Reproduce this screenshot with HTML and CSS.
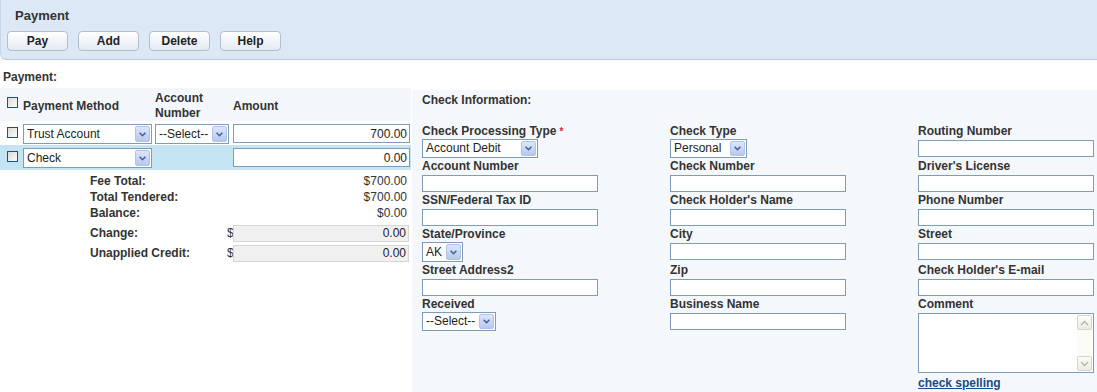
FILE: index.html
```html
<!DOCTYPE html>
<html lang="en">
<head>
    <meta charset="UTF-8">
    <title>Payment</title>
    <link rel="stylesheet" href="styles.css">
</head>
<body>
    <div class="toolbar">
        <h1 class="toolbar-title">Payment</h1>
        <div class="toolbar-buttons">
            <button class="btn">Pay</button>
            <button class="btn">Add</button>
            <button class="btn">Delete</button>
            <button class="btn">Help</button>
        </div>
    </div>

    <div class="section-label">Payment:</div>

    <div class="payment-layout">
        <div class="payment-list">
            <div class="pay-row pay-head">
                <span class="cell-check"><span class="checkbox"></span></span>
                <span>Payment Method</span>
                <span>Account<br>Number</span>
                <span>Amount</span>
            </div>
            <div class="pay-row">
                <span class="cell-check"><span class="checkbox"></span></span>
                <div class="select select-method">
                    <span class="select-text">Trust Account</span>
                    <span class="select-arrow"><svg width="7" height="5" viewBox="0 0 7 5"><path d="M0.6 0.8 L3.5 3.7 L6.4 0.8" fill="none" stroke="#4b5f8c" stroke-width="1.6"/></svg></span>
                </div>
                <div class="select select-account">
                    <span class="select-text">--Select--</span>
                    <span class="select-arrow"><svg width="7" height="5" viewBox="0 0 7 5"><path d="M0.6 0.8 L3.5 3.7 L6.4 0.8" fill="none" stroke="#4b5f8c" stroke-width="1.6"/></svg></span>
                </div>
                <input class="amount-input" type="text" value="700.00">
            </div>
            <div class="pay-row pay-row-selected">
                <span class="cell-check"><span class="checkbox"></span></span>
                <div class="select select-method">
                    <span class="select-text">Check</span>
                    <span class="select-arrow"><svg width="7" height="5" viewBox="0 0 7 5"><path d="M0.6 0.8 L3.5 3.7 L6.4 0.8" fill="none" stroke="#4b5f8c" stroke-width="1.6"/></svg></span>
                </div>
                <span></span>
                <input class="amount-input" type="text" value="0.00">
            </div>

            <div class="totals">
                <div class="total-row">
                    <span class="total-label">Fee Total:</span>
                    <span class="total-value">$700.00</span>
                </div>
                <div class="total-row">
                    <span class="total-label">Total Tendered:</span>
                    <span class="total-value">$700.00</span>
                </div>
                <div class="total-row">
                    <span class="total-label">Balance:</span>
                    <span class="total-value">$0.00</span>
                </div>
                <div class="total-row total-row-field first-field">
                    <span class="total-label">Change:</span>
                    <span class="currency">$</span>
                    <input class="readonly-input" type="text" value="0.00" readonly>
                </div>
                <div class="total-row total-row-field">
                    <span class="total-label">Unapplied Credit:</span>
                    <span class="currency">$</span>
                    <input class="readonly-input" type="text" value="0.00" readonly>
                </div>
            </div>
        </div>

        <div class="check-info">
            <div class="check-title">Check Information:</div>
            <div class="check-grid">
                <div class="field">
                    <div class="field-label">Check Processing Type<span class="required">*</span></div>
                    <div class="select select-processing">
                        <span class="select-text">Account Debit</span>
                        <span class="select-arrow"><svg width="7" height="5" viewBox="0 0 7 5"><path d="M0.6 0.8 L3.5 3.7 L6.4 0.8" fill="none" stroke="#4b5f8c" stroke-width="1.6"/></svg></span>
                    </div>
                </div>
                <div class="field">
                    <div class="field-label">Check Type</div>
                    <div class="select select-type">
                        <span class="select-text">Personal</span>
                        <span class="select-arrow"><svg width="7" height="5" viewBox="0 0 7 5"><path d="M0.6 0.8 L3.5 3.7 L6.4 0.8" fill="none" stroke="#4b5f8c" stroke-width="1.6"/></svg></span>
                    </div>
                </div>
                <div class="field">
                    <div class="field-label">Routing Number</div>
                    <input class="text-input" type="text">
                </div>

                <div class="field">
                    <div class="field-label">Account Number</div>
                    <input class="text-input" type="text">
                </div>
                <div class="field">
                    <div class="field-label">Check Number</div>
                    <input class="text-input" type="text">
                </div>
                <div class="field">
                    <div class="field-label">Driver's License</div>
                    <input class="text-input" type="text">
                </div>

                <div class="field">
                    <div class="field-label">SSN/Federal Tax ID</div>
                    <input class="text-input" type="text">
                </div>
                <div class="field">
                    <div class="field-label">Check Holder's Name</div>
                    <input class="text-input" type="text">
                </div>
                <div class="field">
                    <div class="field-label">Phone Number</div>
                    <input class="text-input" type="text">
                </div>

                <div class="field">
                    <div class="field-label">State/Province</div>
                    <div class="select select-state">
                        <span class="select-text">AK</span>
                        <span class="select-arrow"><svg width="7" height="5" viewBox="0 0 7 5"><path d="M0.6 0.8 L3.5 3.7 L6.4 0.8" fill="none" stroke="#4b5f8c" stroke-width="1.6"/></svg></span>
                    </div>
                </div>
                <div class="field">
                    <div class="field-label">City</div>
                    <input class="text-input" type="text">
                </div>
                <div class="field">
                    <div class="field-label">Street</div>
                    <input class="text-input" type="text">
                </div>

                <div class="field">
                    <div class="field-label">Street Address2</div>
                    <input class="text-input" type="text">
                </div>
                <div class="field">
                    <div class="field-label">Zip</div>
                    <input class="text-input" type="text">
                </div>
                <div class="field">
                    <div class="field-label">Check Holder's E-mail</div>
                    <input class="text-input" type="text">
                </div>

                <div class="field">
                    <div class="field-label">Received</div>
                    <div class="select select-received">
                        <span class="select-text">--Select--</span>
                        <span class="select-arrow"><svg width="7" height="5" viewBox="0 0 7 5"><path d="M0.6 0.8 L3.5 3.7 L6.4 0.8" fill="none" stroke="#4b5f8c" stroke-width="1.6"/></svg></span>
                    </div>
                </div>
                <div class="field">
                    <div class="field-label">Business Name</div>
                    <input class="text-input" type="text">
                </div>
                <div class="field">
                    <div class="field-label">Comment</div>
                    <div class="comment-box">
                        <div class="scrollbar">
                            <span class="scroll-btn"><svg width="9" height="6" viewBox="0 0 9 6"><path d="M1 5 L4.5 1.5 L8 5" fill="none" stroke="#b4b3aa" stroke-width="1.4"/></svg></span>
                            <span class="scroll-btn"><svg width="9" height="6" viewBox="0 0 9 6"><path d="M1 1 L4.5 4.5 L8 1" fill="none" stroke="#b4b3aa" stroke-width="1.4"/></svg></span>
                        </div>
                    </div>
                    <a class="spell-link" href="#">check spelling</a>
                </div>
            </div>
        </div>
    </div>
</body>
</html>
```

FILE: styles.css
```css
body {
    margin: 0;
    font-family: "Liberation Sans", Arial, sans-serif;
    font-size: 12px;
    color: #333;
    background: #fff;
    overflow: hidden;
}

/* toolbar */
.toolbar {
    background: #dce8f5;
    border-bottom: 1px solid #b7cce4;
    border-left: 1px solid #c4d6ea;
    border-radius: 0 0 0 6px;
    padding: 8px 0 8px 6px;
}

.toolbar-title {
    margin: 0 0 7px 8px;
    font-size: 13px;
    line-height: 16px;
    font-weight: bold;
    color: #333;
}

.toolbar-buttons {
    display: flex;
    gap: 10px;
}

.btn {
    width: 61px;
    height: 20px;
    padding: 0;
    border: 1px solid #b5bdc8;
    border-radius: 4px;
    background: linear-gradient(#ffffff, #e3eaf3);
    font-family: inherit;
    font-size: 12px;
    font-weight: bold;
    color: #222;
}

.section-label {
    font-weight: bold;
    line-height: 16px;
    padding: 9px 0 0 3px;
    margin-bottom: 3px;
}

.payment-layout {
    display: flex;
    align-items: stretch;
}

/* payment list (left) */
.payment-list {
    width: 411px;
    flex-shrink: 0;
}

.pay-row {
    display: grid;
    grid-template-columns: 20px 132px 78px 177px;
    align-items: start;
    padding: 3px 0 0 3px;
    height: 24px;
    box-sizing: border-box;
}

.pay-head {
    height: 33px;
    align-items: center;
    background: #f3f7fb;
    font-weight: bold;
    line-height: 15px;
}

.pay-head .cell-check {
    align-self: start;
    margin-top: 3px;
}

.pay-row-selected {
    height: 25px;
    background: #c4e3f3;
}

.cell-check {
    padding: 3px 0 0 4px;
}

.checkbox {
    display: block;
    width: 9px;
    height: 9px;
    border: 1px solid #1c5180;
    background: linear-gradient(135deg, #dcdcd6, #fbfbf9);
}

.select {
    display: flex;
    align-items: stretch;
    box-sizing: border-box;
    height: 19px;
    border: 1px solid #7f9db9;
    background: #fff;
}

.select-text {
    flex: 1;
    padding-left: 3px;
    line-height: 17px;
    white-space: nowrap;
    overflow: hidden;
    color: #222;
}

.select-arrow {
    width: 15px;
    margin: 1px;
    box-sizing: border-box;
    border: 1px solid #b3c3e6;
    border-radius: 2px;
    background: linear-gradient(#dce6fc, #b6c7f2);
    display: flex;
    align-items: center;
    justify-content: center;
}

.select-method { width: 129px; height: 20px; }
.select-account { width: 74px; height: 20px; }
.select-processing { width: 116px; }
.select-type { width: 77px; }
.select-state { width: 41px; height: 20px; }
.select-received { width: 74px; }

.select-state .select-text,
.select-method .select-text,
.select-account .select-text {
    line-height: 18px;
}

.amount-input,
.readonly-input,
.text-input {
    box-sizing: border-box;
    font-family: inherit;
    font-size: 12px;
    color: #222;
    margin: 0;
}

.amount-input {
    width: 177px;
    height: 19px;
    border: 1px solid #7f9db9;
    text-align: right;
    padding: 0 2px 0 0;
}

/* totals */
.totals {
    padding: 3px 0 0 90px;
}

.total-row {
    display: grid;
    grid-template-columns: 137px 6px 176px;
    align-items: center;
    height: 16px;
}

.total-label {
    font-weight: bold;
}

.total-value {
    grid-column: 2 / 4;
    text-align: right;
    padding-right: 2px;
}

.total-row-field {
    height: 20px;
}

.first-field {
    margin-top: 2px;
}

.readonly-input {
    width: 176px;
    height: 17px;
    border: 1px solid #d6d6d6;
    background: #f0f0f0;
    text-align: right;
    padding: 0 2px 0 0;
}

/* check information (right) */
.check-info {
    flex: 1;
    margin: 2px 0 0 1px;
    background: #f4f8fc;
    padding: 3px 0 10px 10px;
}

.check-title {
    font-weight: bold;
    line-height: 15px;
    margin-bottom: 16px;
}

.check-grid {
    display: grid;
    grid-template-columns: 248px 248px 176px;
    align-items: start;
}

.field {
    padding-bottom: 1px;
}

.field-label {
    font-weight: bold;
    line-height: 15px;
}

.required {
    color: #e02020;
    font-size: 10px;
    margin-left: 3px;
    vertical-align: top;
}

.text-input {
    display: block;
    width: 176px;
    height: 17px;
    margin-top: 1px;
    border: 1px solid #7f9db9;
    background: #fff;
    padding: 0 2px;
}

.comment-box {
    width: 176px;
    height: 60px;
    margin-top: 1px;
    box-sizing: border-box;
    border: 1px solid #7f9db9;
    background: #fff;
    display: flex;
    justify-content: flex-end;
}

.scrollbar {
    width: 15px;
    margin: 1px;
    background: #fbfbf8;
    display: flex;
    flex-direction: column;
    justify-content: space-between;
}

.scroll-btn {
    height: 15px;
    box-sizing: border-box;
    border: 1px solid #d6d5cd;
    border-radius: 2px;
    background: linear-gradient(#fdfdfb, #eceae2);
    display: flex;
    align-items: center;
    justify-content: center;
}

.spell-link {
    display: inline-block;
    margin-top: 3px;
    line-height: 15px;
    font-weight: bold;
    color: #1b4a87;
    text-decoration: underline;
}
```
